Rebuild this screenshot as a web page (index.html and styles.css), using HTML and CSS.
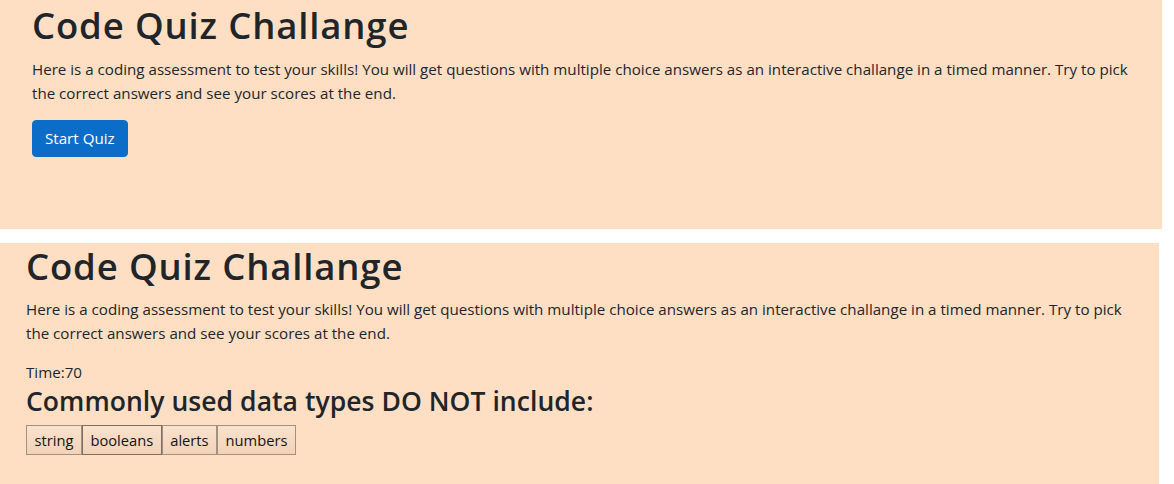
FILE: index.html
```html
<!DOCTYPE html>
<html lang="en">
<head>
<meta charset="utf-8">
<title>Code Quiz Challange</title>
<link rel="stylesheet" href="styles.css">
</head>
<body>
<section class="panel panel-start">
  <h1 class="title">Code Quiz Challange</h1>
  <p class="intro">Here is a coding assessment to test your skills! You will get questions with multiple choice answers as an interactive challange in a timed manner. Try to pick the correct answers and see your scores at the end.</p>
  <button class="btn-primary" type="button">Start Quiz</button>
</section>
<section class="panel panel-quiz">
  <h1 class="title">Code Quiz Challange</h1>
  <p class="intro">Here is a coding assessment to test your skills! You will get questions with multiple choice answers as an interactive challange in a timed manner. Try to pick the correct answers and see your scores at the end.</p>
  <div class="timer">Time:70</div>
  <h3 class="question">Commonly used data types DO NOT include:</h3>
  <div class="answers">
    <button class="answer" type="button">string</button>
    <button class="answer answer-hover" type="button">booleans</button>
    <button class="answer" type="button">alerts</button>
    <button class="answer" type="button">numbers</button>
  </div>
</section>
</body>
</html>
```
FILE: styles.css
```css
html, body {
  margin: 0;
  padding: 0;
  background: #ffffff;
}
body {
  font-family: "Open Sans", "Noto Sans", sans-serif;
  font-size: 15.15px;
  line-height: 24px;
  color: #212529;
}
.panel {
  background: #fedfc4;
  box-sizing: border-box;
}
.panel-start {
  width: 1162px;
  height: 229px;
  padding: 0 20px 0 32px;
}
.panel-quiz {
  width: 1159px;
  height: 241px;
  margin-top: 14px;
  padding: 0 20px 0 26px;
}
.title {
  margin: 0 0 7px;
  font-size: 36.5px;
  line-height: 50px;
  font-weight: 600;
  letter-spacing: 0.85px;
}
.panel-quiz .title {
  line-height: 47px;
}
.intro {
  margin: 0 0 15px;
}
.btn-primary {
  display: block;
  font-family: inherit;
  font-size: 15.15px;
  line-height: 23px;
  padding: 6px 12px;
  border: 1px solid #0b6dc8;
  border-radius: 4px;
  background: #0b6dc8;
  color: #ffffff;
  cursor: pointer;
}
.timer {
  line-height: 24px;
}
.question {
  margin: 1px 0 8px;
  font-size: 26.5px;
  line-height: 32px;
  font-weight: 600;
  letter-spacing: 0.05px;
}
.answers {
  display: flex;
}
.answer {
  font-family: inherit;
  font-size: 14.7px;
  line-height: 22px;
  padding: 3px 7.5px;
  border: 1px solid #a1917f;
  border-radius: 0;
  background: linear-gradient(#fae2cd, #f2d3b8);
  color: #141414;
}
.answer-hover {
  border-color: #7e6d60;
}
```
